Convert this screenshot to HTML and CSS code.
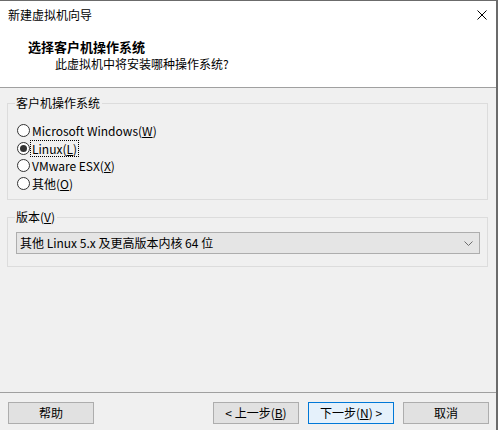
FILE: index.html
```html
<!DOCTYPE html>
<html lang="zh-CN">
<head>
<meta charset="utf-8">
<title>新建虚拟机向导</title>
<link rel="stylesheet" href="styles.css">
</head>
<body>
<div class="window">
  <div class="titlebar">
    <span class="title">新建虚拟机向导</span>
    <svg class="close" width="10" height="10" viewBox="0 0 10 10"><path d="M0.5 0.5 L9.5 9.5 M9.5 0.5 L0.5 9.5" stroke="#000" stroke-width="1" fill="none"/></svg>
  </div>
  <div class="header">
    <div class="h-title">选择客户机操作系统</div>
    <div class="h-sub">此虚拟机中将安装哪种操作系统?</div>
  </div>
  <div class="main">
    <fieldset class="group group-os">
      <legend>客户机操作系统</legend>
      <div class="radios">
        <div class="radio-row"><span class="radio"></span><span class="rlabel">Microsoft Windows(<u>W</u>)</span></div>
        <div class="radio-row"><span class="radio checked"></span><span class="rlabel focus">Linux(<u>L</u>)</span></div>
        <div class="radio-row"><span class="radio"></span><span class="rlabel">VMware ESX(<u>X</u>)</span></div>
        <div class="radio-row"><span class="radio"></span><span class="rlabel">其他(<u>O</u>)</span></div>
      </div>
    </fieldset>
    <fieldset class="group group-ver">
      <legend>版本(<u>V</u>)</legend>
      <div class="select">
        <span class="select-text">其他 Linux 5.x 及更高版本内核 64 位</span>
        <svg class="chev" width="9" height="5" viewBox="0 0 9 5"><path d="M0.5 0.5 L4.5 4.5 L8.5 0.5" stroke="#6d6d6d" stroke-width="1" fill="none"/></svg>
      </div>
    </fieldset>
  </div>
  <div class="footer">
    <button class="btn">帮助</button>
    <div class="spacer"></div>
    <button class="btn">&lt; 上一步(<u>B</u>)</button>
    <button class="btn default">下一步(<u>N</u>) &gt;</button>
    <button class="btn">取消</button>
  </div>
</div>
</body>
</html>
```

FILE: styles.css
```css
* { box-sizing: border-box; }
html, body { margin: 0; padding: 0; }
body {
  width: 498px;
  height: 430px;
  overflow: hidden;
  font-family: "Noto Sans CJK SC", "Noto Sans", sans-serif;
  font-size: 12px;
  color: #000;
  background: #f0f0f0;
}
.window {
  width: 498px;
  height: 430px;
  display: flex;
  flex-direction: column;
  border-top: 1px solid #6b6b6b;
  border-right: 2px solid #6b6b6b;
  background: #f0f0f0;
}
.titlebar {
  height: 29px;
  background: #fff;
  display: flex;
  align-items: center;
  padding: 0 9px 0 8px;
}
.title { flex: 1; line-height: 16px; margin-top: -2px; }
.close { display: block; margin-top: -1px; }
.header {
  background: #fff;
  height: 58px;
  padding-top: 8px;
  border-bottom: 1px solid #a0a0a0;
}
.h-title {
  font-size: 13px;
  font-weight: bold;
  line-height: 18px;
  padding-left: 28px;
}
.h-sub {
  line-height: 16px;
  padding-left: 55px;
}
.main {
  flex: 1;
  padding: 7px 8px 0 7px;
}
.group {
  margin: 0;
  padding: 0;
  border: 1px solid #dcdcdc;
  min-width: 0;
}
.group legend {
  margin-left: 7px;
  padding: 0 2px 0 1px;
  line-height: 16px;
}
.group-os { padding: 11px 0 7px 0; }
.radios { padding-left: 9px; }
.radio-row {
  height: 17.5px;
  display: flex;
  align-items: center;
}
.radio {
  width: 13px;
  height: 13px;
  border: 1px solid #333;
  border-radius: 50%;
  background: #fff;
  position: relative;
  flex: none;
}
.radio.checked::after {
  content: "";
  position: absolute;
  left: 2px;
  top: 2px;
  width: 7px;
  height: 7px;
  border-radius: 50%;
  background: #333;
}
.rlabel {
  margin-left: 1px;
  line-height: 15px;
  padding: 0 1px;
}
.rlabel.focus { outline: 1px dotted #000; outline-offset: 0; }
.group-ver {
  margin-top: 9px;
  padding: 7px 7px 12px 0;
}
.select {
  margin-left: 8px;
  height: 22px;
  border: 1px solid #adadad;
  background: #e5e5e5;
  display: flex;
  align-items: center;
  padding: 0 6px 0 3px;
}
.select-text { flex: 1; line-height: 16px; }
.chev { display: block; }
.footer {
  height: 38px;
  border-top: 1px solid #a0a0a0;
  display: flex;
  align-items: flex-start;
  padding: 9px 7px 0 8px;
  gap: 9px;
}
.spacer { flex: 1; }
.btn {
  width: 86px;
  height: 22px;
  border: 1px solid #adadad;
  background: #e1e1e1;
  font: inherit;
  color: #000;
  padding: 0;
  line-height: 16px;
  margin: 0;
}
.btn.default {
  border-color: #0078d7;
  background: #e5f1fb;
}
```
